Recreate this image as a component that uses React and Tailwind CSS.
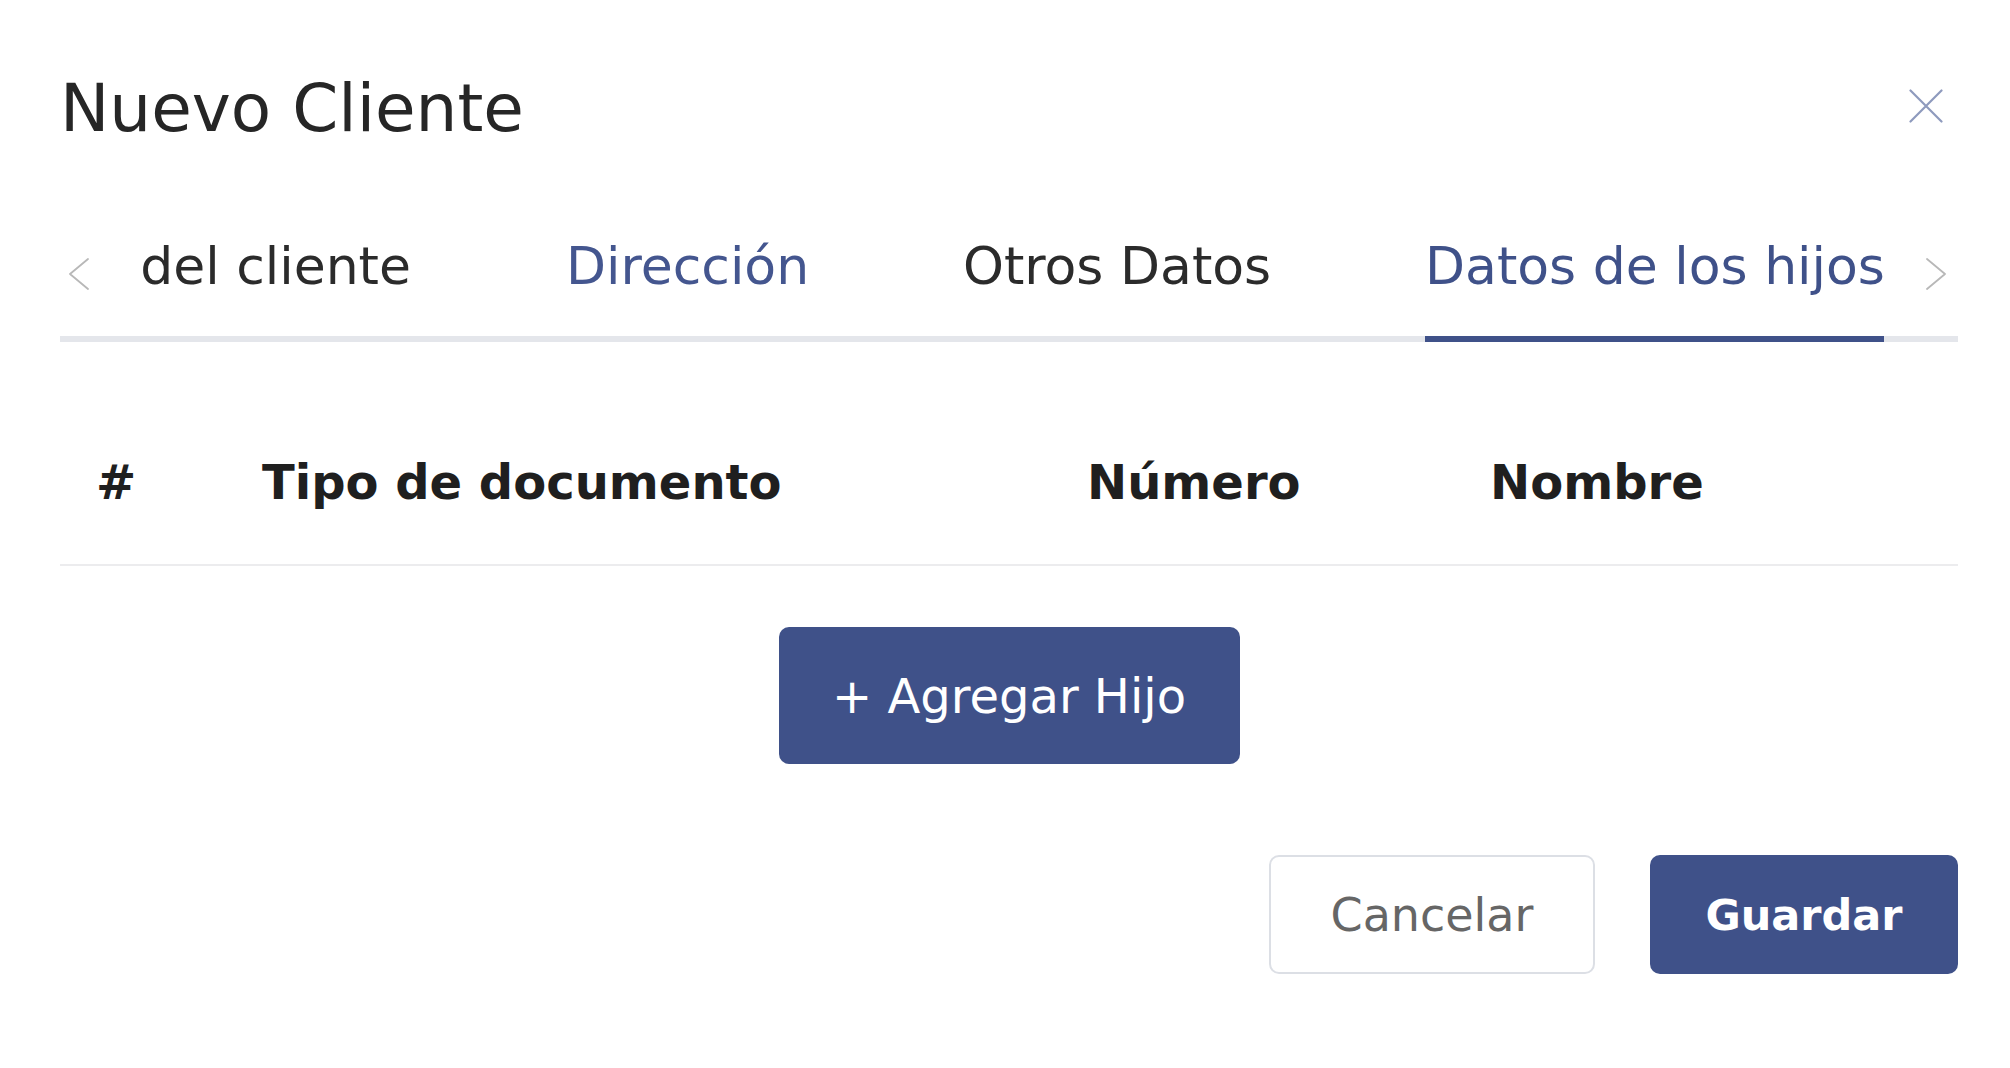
import React from "react";

const tabs = [
  { key: "cliente", label: "Datos del cliente", width: "w-[281px]", clipped: true },
  { key: "direccion", label: "Dirección", width: "w-[244px] ml-[155px]", hint: true },
  { key: "otros", label: "Otros Datos", width: "w-[307px] ml-[153px]" },
  { key: "hijos", label: "Datos de los hijos", width: "w-[459px] ml-[155px]", active: true },
];

function Chevron({ dir }) {
  const pts = dir === "left" ? "19,1 1,16 19,31" : "1,1 19,16 1,31";
  return (
    <svg width="20" height="32" viewBox="0 0 20 32" fill="none">
      <polyline points={pts} stroke="#b8b8b8" strokeWidth="1.8" strokeLinecap="round" strokeLinejoin="round" />
    </svg>
  );
}

function Tab({ tab }) {
  // first tab is scrolled out to the left, only its end shows
  if (tab.clipped) {
    return (
      <div className={`${tab.width} flex justify-end overflow-hidden pb-[38px]`}>
        <span className="whitespace-nowrap text-[52px] leading-[64px] text-[#2b2b2b]">{tab.label}</span>
      </div>
    );
  }
  if (tab.active) {
    return (
      <div className={`${tab.width} -mb-[6px] border-b-[6px] border-[#3f5189] pb-[38px]`}>
        <span className="whitespace-nowrap text-[52px] leading-[64px] text-[#3f5189]">{tab.label}</span>
      </div>
    );
  }
  return (
    <div className={`${tab.width} pb-[38px]`}>
      <span
        className={`whitespace-nowrap text-[52px] leading-[64px] ${tab.hint ? "text-[#44568f]" : "text-[#2b2b2b]"}`}
      >
        {tab.label}
      </span>
    </div>
  );
}

export default function App() {
  return (
    <div className="min-h-screen w-full bg-white pl-[60px] pr-[52px] pt-[69px] font-['DejaVu_Sans',sans-serif]">
      {/* header */}
      <div className="flex h-[80px] items-start justify-between">
        <h2 className="text-[66px] font-normal leading-[80px] text-[#262626]">Nuevo Cliente</h2>
        <button className="mr-[15px] mt-[20px]" aria-label="Cerrar">
          <svg width="34" height="34" viewBox="0 0 34 34" fill="none">
            <path d="M1.5 1.5 L32.5 32.5 M32.5 1.5 L1.5 32.5" stroke="#8e9abd" strokeWidth="2.2" strokeLinecap="round" />
          </svg>
        </button>
      </div>

      {/* tabs */}
      <div className="mt-[85px] flex border-b-[6px] border-[#e4e6eb]">
        <div className="w-[70px] shrink-0 pl-[9px] pt-[24px]">
          <Chevron dir="left" />
        </div>
        {tabs.map((t) => (
          <Tab key={t.key} tab={t} />
        ))}
        <div className="flex-1" />
        <div className="w-[40px] shrink-0 pl-[8px] pt-[24px]">
          <Chevron dir="right" />
        </div>
      </div>

      {/* table */}
      <div className="mt-[60px]">
        <div className="grid grid-cols-[166px_825px_403px_1fr] border-b-2 border-[#ececee] pb-[52px] pt-[50px] text-[48px] font-bold leading-[60px] text-[#1f1f1f]">
          <div className="px-[36px]">#</div>
          <div className="px-[36px]">Tipo de documento</div>
          <div className="px-[36px]">Número</div>
          <div className="px-[36px]">Nombre</div>
        </div>
        <div className="flex justify-center pt-[61px]">
          <button className="flex h-[137px] w-[461px] items-center justify-center rounded-[10px] bg-[#3f5189] text-[48px] leading-[60px] text-white">
            + Agregar Hijo
          </button>
        </div>
      </div>

      {/* footer */}
      <div className="mt-[91px] flex justify-end gap-[55px]">
        <button className="flex h-[119px] w-[326px] items-center justify-center rounded-[10px] border-2 border-[#dcdfe5] bg-white text-[46px] leading-[56px] text-[#666666]">
          Cancelar
        </button>
        <button className="flex h-[119px] w-[308px] items-center justify-center rounded-[10px] bg-[#3f5189] text-[43px] font-bold leading-[56px] text-white">
          Guardar
        </button>
      </div>
    </div>
  );
}
